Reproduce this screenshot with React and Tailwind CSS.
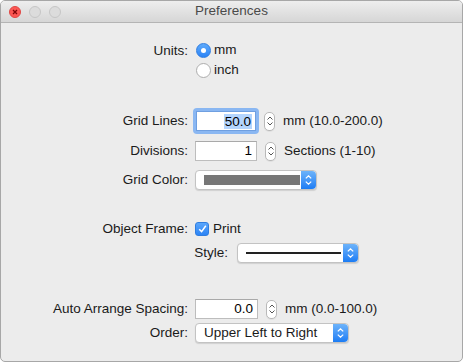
import React from "react";

const font = { fontFamily: '"Liberation Sans", Arial, sans-serif' };

function Stepper() {
  return (
    <div className="ml-[8px] w-[11px] h-[19px] rounded-[5px] border border-[#b9b9b9] bg-white flex flex-col items-center justify-center gap-[2px] shadow-[0_1px_0_rgba(0,0,0,0.05)]">
      <svg width="6" height="4" viewBox="0 0 6 4"><path d="M0.5 3.5 L3 1 L5.5 3.5" fill="none" stroke="#555" strokeWidth="1" /></svg>
      <svg width="6" height="4" viewBox="0 0 6 4"><path d="M0.5 0.5 L3 3 L5.5 0.5" fill="none" stroke="#555" strokeWidth="1" /></svg>
    </div>
  );
}

function PopupArrows() {
  return (
    <div className="w-[15px] self-stretch rounded-r-[4px] bg-gradient-to-b from-[#6cb3fa] to-[#1a7cf4] flex flex-col items-center justify-center gap-[2px]">
      <svg width="7" height="4" viewBox="0 0 7 4"><path d="M0.8 3.4 L3.5 0.8 L6.2 3.4" fill="none" stroke="#fff" strokeWidth="1.2" /></svg>
      <svg width="7" height="4" viewBox="0 0 7 4"><path d="M0.8 0.6 L3.5 3.2 L6.2 0.6" fill="none" stroke="#fff" strokeWidth="1.2" /></svg>
    </div>
  );
}

function Popup({ width, children }) {
  return (
    <div
      className="h-[20px] flex items-stretch rounded-[4px] border border-[#c3c3c3] bg-white shadow-[0_1px_1px_rgba(0,0,0,0.12)]"
      style={{ width }}
    >
      <div className="flex-1 flex items-center min-w-0">{children}</div>
      <PopupArrows />
    </div>
  );
}

function Label({ children }) {
  return <div className="w-[187px] text-right text-[13.5px] text-[#1a1a1a] leading-none">{children}</div>;
}

function Field({ value, focused, width = 62 }) {
  if (focused) {
    return (
      <div className="p-[3px] -m-[3px] rounded-[4px] bg-[#8ab7f2]">
        <div className="h-[20px] bg-white border border-[#6f9fe0] flex items-center justify-end pr-[3px]" style={{ width: width - 2 }}>
          <span className="bg-[#b4d5fe] text-[13.5px] leading-[15px] text-black px-[1px]">{value}</span>
        </div>
      </div>
    );
  }
  return (
    <div className="h-[20px] bg-white border border-[#bdbdbd] border-t-[#a9a9a9] flex items-center justify-end pr-[4px] text-[13.5px] text-black" style={{ width }}>
      {value}
    </div>
  );
}

export default function App() {
  return (
    <div style={font} className="w-[464px] h-[363px] bg-white">
      <div className="w-[463px] h-[362px] rounded-[5px] border border-[#a7a7a7] bg-[#ececec] overflow-hidden flex flex-col">
        {/* title bar */}
        <div className="h-[22px] shrink-0 bg-gradient-to-b from-[#eeeeee] to-[#d6d6d6] border-b border-[#b4b4b4] flex items-center relative">
          <div className="flex items-center gap-[8px] pl-[8px]">
            <div className="w-[12px] h-[12px] rounded-full bg-[#fc5753] border border-[#df4744] flex items-center justify-center">
              <svg width="6" height="6" viewBox="0 0 6 6"><path d="M1 1 L5 5 M5 1 L1 5" stroke="#7e0508" strokeWidth="1.3" /></svg>
            </div>
            <div className="w-[12px] h-[12px] rounded-full bg-[#dcdcdc] border border-[#c6c6c6]" />
            <div className="w-[12px] h-[12px] rounded-full bg-[#dcdcdc] border border-[#c6c6c6]" />
          </div>
          <div className="absolute inset-0 flex items-center justify-center text-[13.5px] text-[#4a4a4a]">Preferences</div>
        </div>

        {/* body */}
        <div className="flex flex-col text-[13.5px] text-[#1a1a1a]">
          {/* Units */}
          <div className="mt-[20px] flex items-center h-[15px]">
            <Label>Units:</Label>
            <div className="ml-[8px] w-[15px] h-[15px] rounded-full bg-gradient-to-b from-[#5eaafb] to-[#2a83f6] border border-[#2f7de0] flex items-center justify-center">
              <div className="w-[5px] h-[5px] rounded-full bg-white" />
            </div>
            <span className="ml-[3px]">mm</span>
          </div>
          <div className="mt-[5px] flex items-center h-[15px]">
            <div className="w-[187px]" />
            <div className="ml-[8px] w-[15px] h-[15px] rounded-full bg-white border border-[#adadad]" />
            <span className="ml-[3px]">inch</span>
          </div>

          {/* Grid Lines */}
          <div className="mt-[33px] flex items-center h-[20px]">
            <Label>Grid Lines:</Label>
            <div className="ml-[8px]"><Field value="50.0" focused width={62} /></div>
            <Stepper />
            <span className="ml-[8px]">mm (10.0-200.0)</span>
          </div>

          {/* Divisions */}
          <div className="mt-[10px] flex items-center h-[20px]">
            <Label>Divisions:</Label>
            <div className="ml-[7px]"><Field value="1" width={62} /></div>
            <Stepper />
            <span className="ml-[8px]">Sections (1-10)</span>
          </div>

          {/* Grid Color */}
          <div className="mt-[9px] flex items-center h-[20px]">
            <Label>Grid Color:</Label>
            <div className="ml-[7px]">
              <Popup width={122}>
                <div className="ml-[8px] mr-[1px] flex-1 h-[10px] bg-[#777777]" />
              </Popup>
            </div>
          </div>

          {/* Object Frame */}
          <div className="mt-[32px] flex items-center h-[14px]">
            <Label>Object Frame:</Label>
            <div className="ml-[7px] w-[14px] h-[14px] rounded-[3px] bg-gradient-to-b from-[#5aa6fb] to-[#2b84f5] border border-[#2f7de0] flex items-center justify-center">
              <svg width="9" height="8" viewBox="0 0 9 8"><path d="M1.2 4.2 L3.6 6.6 L7.8 0.8" fill="none" stroke="#fff" strokeWidth="1.5" /></svg>
            </div>
            <span className="ml-[4px]">Print</span>
          </div>

          {/* Style */}
          <div className="mt-[7px] flex items-center h-[20px]">
            <div className="w-[227px] text-right">Style:</div>
            <div className="ml-[9px]">
              <Popup width={122}>
                <div className="ml-[8px] mr-[2px] flex-1 h-[2px] bg-[#222222]" />
              </Popup>
            </div>
          </div>

          {/* Auto Arrange Spacing */}
          <div className="mt-[36px] flex items-center h-[20px]">
            <Label>Auto Arrange Spacing:</Label>
            <div className="ml-[7px]"><Field value="0.0" width={63} /></div>
            <Stepper />
            <span className="ml-[8px]">mm (0.0-100.0)</span>
          </div>

          {/* Order */}
          <div className="mt-[4px] flex items-center h-[20px]">
            <Label>Order:</Label>
            <div className="ml-[7px]">
              <Popup width={154}>
                <span className="ml-[8px]">Upper Left to Right</span>
              </Popup>
            </div>
          </div>
        </div>
      </div>
    </div>
  );
}
